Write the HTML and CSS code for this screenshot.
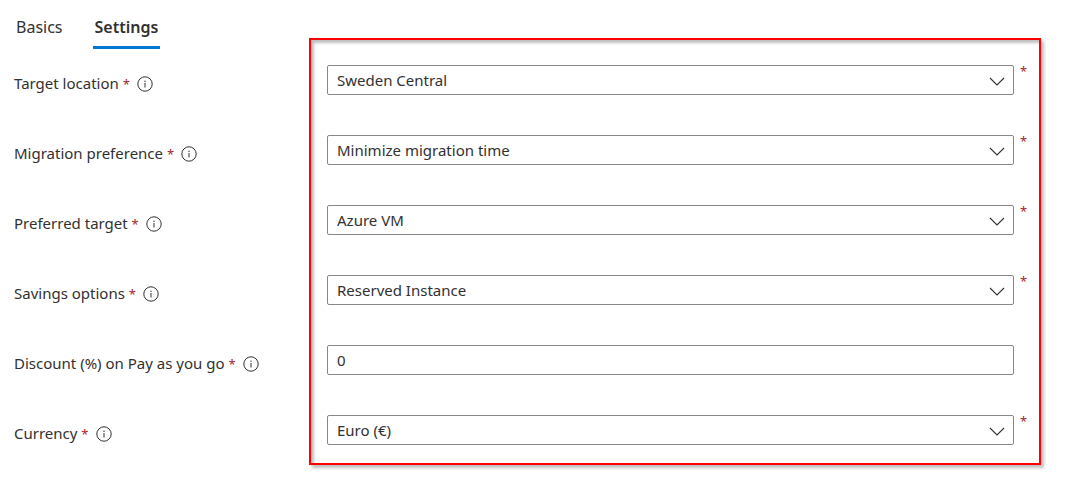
FILE: index.html
```html
<!DOCTYPE html>
<html lang="en">
<head>
<meta charset="utf-8">
<meta name="viewport" content="width=device-width, initial-scale=1">
<title>Settings</title>
<link rel="stylesheet" href="styles.css">
</head>
<body>
<svg class="symbols" aria-hidden="true">
  <symbol id="info" viewBox="0 0 16 16">
    <circle cx="8" cy="8" r="7.2" fill="none" stroke="currentColor" stroke-width="1"/>
    <path d="M8 7v4.5" fill="none" stroke="currentColor" stroke-width="1"/>
    <circle cx="8" cy="5.2" r=".7" fill="currentColor"/>
  </symbol>
  <symbol id="chevron" viewBox="0 0 16 10">
    <path d="M1 1l7 7 7-7" fill="none" stroke="currentColor" stroke-width="1.1"/>
  </symbol>
</svg>
<nav class="tabs" role="tablist">
  <button class="tab" type="button" role="tab" aria-selected="false">Basics</button>
  <button class="tab tab-active" type="button" role="tab" aria-selected="true">Settings</button>
</nav>
<form class="settings">
  <div class="row">
    <div class="caption"><label for="location">Target location <span class="required">*</span></label><svg class="info"><use href="#info"/></svg></div>
    <div class="control"><select class="field" id="location"><option>Sweden Central</option></select><svg class="chevron"><use href="#chevron"/></svg></div>
    <span class="required">*</span>
  </div>
  <div class="row">
    <div class="caption"><label for="preference">Migration preference <span class="required">*</span></label><svg class="info"><use href="#info"/></svg></div>
    <div class="control"><select class="field" id="preference"><option>Minimize migration time</option></select><svg class="chevron"><use href="#chevron"/></svg></div>
    <span class="required">*</span>
  </div>
  <div class="row">
    <div class="caption"><label for="target">Preferred target <span class="required">*</span></label><svg class="info"><use href="#info"/></svg></div>
    <div class="control"><select class="field" id="target"><option>Azure VM</option></select><svg class="chevron"><use href="#chevron"/></svg></div>
    <span class="required">*</span>
  </div>
  <div class="row">
    <div class="caption"><label for="savings">Savings options <span class="required">*</span></label><svg class="info"><use href="#info"/></svg></div>
    <div class="control"><select class="field" id="savings"><option>Reserved Instance</option></select><svg class="chevron"><use href="#chevron"/></svg></div>
    <span class="required">*</span>
  </div>
  <div class="row">
    <div class="caption"><label for="discount">Discount (%) on Pay as you go <span class="required">*</span></label><svg class="info"><use href="#info"/></svg></div>
    <div class="control"><input class="field" id="discount" type="text" value="0"></div>
  </div>
  <div class="row">
    <div class="caption"><label for="currency">Currency <span class="required">*</span></label><svg class="info"><use href="#info"/></svg></div>
    <div class="control"><select class="field" id="currency"><option>Euro (€)</option></select><svg class="chevron"><use href="#chevron"/></svg></div>
    <span class="required">*</span>
  </div>
  <div class="highlight"></div>
</form>
</body>
</html>
```

FILE: styles.css
```css
* {
  box-sizing: border-box;
}

body {
  margin: 0;
  padding-bottom: 24px;
  background: #fff;
  color: #323130;
  font: 15px/20px "Segoe UI", "Noto Sans", sans-serif;
}

.symbols {
  display: none;
}

.tabs {
  display: flex;
  gap: 28px;
  padding: 8px 14px 0;
}

.tab {
  height: 41px;
  padding: 0 2px;
  border: 0;
  border-bottom: 3px solid transparent;
  background: none;
  color: inherit;
  font: 16px/24px "Segoe UI", "Noto Sans", sans-serif;
}

.tab-active {
  border-bottom-color: #0078d4;
  font-weight: 600;
}

.settings {
  position: relative;
  display: grid;
  gap: 40px;
  padding: 16px 38px 20px 14px;
}

.row {
  display: grid;
  grid-template-columns: 313px 1fr 13px;
}

.caption {
  display: flex;
  align-items: flex-end;
  gap: 7px;
  padding-bottom: 2px;
}

.required {
  color: #a4262c;
  font-size: 13px;
  line-height: 1;
}

.row > .required {
  padding-left: 6px;
}

.info {
  width: 16px;
  height: 16px;
  margin-bottom: 1px;
}

.control {
  display: grid;
  align-items: center;
}

.control > * {
  grid-area: 1 / 1;
}

.field {
  width: 100%;
  height: 30px;
  padding: 0 9px;
  border: 1px solid #8a8886;
  border-radius: 2px;
  appearance: none;
  background: #fff;
  color: inherit;
  font: inherit;
}

.chevron {
  justify-self: end;
  width: 16px;
  height: 10px;
  margin: 3px 9px 0 0;
  pointer-events: none;
}

.highlight {
  position: absolute;
  inset: -11px 24px 0 309px;
  border: 2px solid #f00;
  box-shadow: 3px 3px 3px rgba(0, 0, 0, .25), inset 3px 3px 3px rgba(0, 0, 0, .25);
  pointer-events: none;
}
```
